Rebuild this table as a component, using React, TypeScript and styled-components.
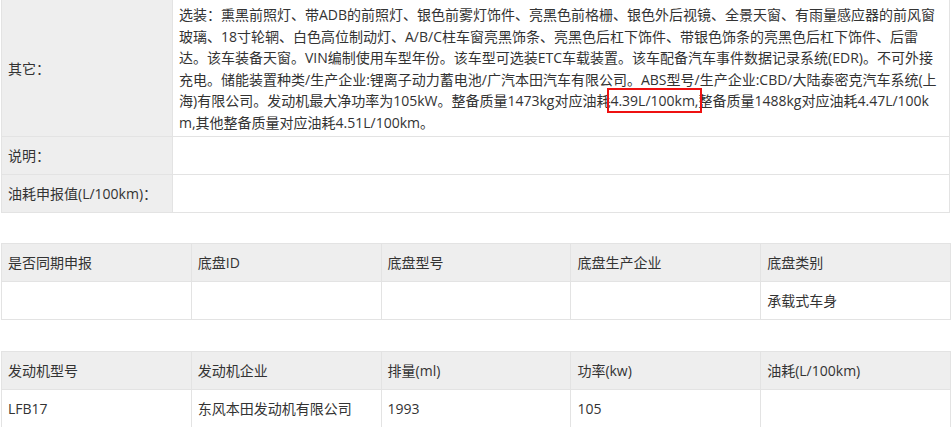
import React from 'react';
import styled, { createGlobalStyle } from 'styled-components';

const GlobalStyle = createGlobalStyle`
  html, body {
    margin: 0;
    padding: 0;
    background: #ffffff;
  }
  body {
    font-family: "Open Sans", "Noto Sans CJK SC", "Noto Sans", sans-serif;
    font-size: 14px;
    color: #333333;
  }
`

const Page = styled.div`
  width: 950px;
  padding: 0 1px;
  overflow: hidden;
  height: 427px;
`

const InfoTable = styled.table`
  width: 949px;
  border-collapse: collapse;
  table-layout: fixed;
  margin-top: -1px;
`

const LabelCell = styled.td`
  width: 158px;
  background-color: #eeeeee;
  border: 1px solid #e3e3e3;
  padding: 8px 6px;
  line-height: 21px;
  vertical-align: middle;
  white-space: nowrap;
`

const ValueCell = styled.td<{ $tall?: boolean }>`
  background-color: #ffffff;
  border: 1px solid #e3e3e3;
  padding: ${p => (p.$tall ? '4px 6px 3px' : '8px 6px')};
  line-height: ${p => (p.$tall ? '21.5px' : '21px')};
  vertical-align: middle;
`

const TextLine = styled.span`
  display: block;
  white-space: nowrap;
`

const Marked = styled.span`
  outline: 2px solid #ee1111;
  outline-offset: 1px;
`

const GridTable = styled.table<{ $top: number }>`
  width: 950px;
  border-collapse: collapse;
  table-layout: fixed;
  margin-top: ${p => p.$top}px;
`

const HeadCell = styled.td`
  width: 20%;
  background-color: #eeeeee;
  border: 1px solid #e3e3e3;
  padding: 8px 6px;
  line-height: 21px;
  white-space: nowrap;
`

const BodyCell = styled.td`
  background-color: #ffffff;
  border: 1px solid #e3e3e3;
  padding: 8px 6px;
  line-height: 21px;
  height: 21px;
  white-space: nowrap;
`

const otherLines = [
  '选装：熏黑前照灯、带ADB的前照灯、银色前雾灯饰件、亮黑色前格栅、银色外后视镜、全景天窗、有雨量感应器的前风窗',
  '玻璃、18寸轮辋、白色高位制动灯、A/B/C柱车窗亮黑饰条、亮黑色后杠下饰件、带银色饰条的亮黑色后杠下饰件、后雷',
  '达。该车装备天窗。VIN编制使用车型年份。该车型可选装ETC车载装置。该车配备汽车事件数据记录系统(EDR)。不可外接',
  '充电。储能装置种类/生产企业:锂离子动力蓄电池/广汽本田汽车有限公司。ABS型号/生产企业:CBD/大陆泰密克汽车系统(上',
]

const chassisHead = ['是否同期申报', '底盘ID', '底盘型号', '底盘生产企业', '底盘类别']
const chassisRow = ['', '', '', '', '承载式车身']

const engineHead = ['发动机型号', '发动机企业', '排量(ml)', '功率(kw)', '油耗(L/100km)']
const engineRow = ['LFB17', '东风本田发动机有限公司', '1993', '105', '']

const Grid: React.FC<{ head: string[]; row: string[]; top: number }> = ({ head, row, top }) => (
  <GridTable $top={top}>
    <tbody>
      <tr>
        {head.map(h => <HeadCell key={h}>{h}</HeadCell>)}
      </tr>
      <tr>
        {row.map((c, i) => <BodyCell key={i}>{c}</BodyCell>)}
      </tr>
    </tbody>
  </GridTable>
)

const App: React.FC = () => {
  return (
    <Page>
      <GlobalStyle />
      <InfoTable>
        <tbody>
          <tr>
            <LabelCell>其它：</LabelCell>
            <ValueCell $tall>
              {otherLines.map(l => <TextLine key={l}>{l}</TextLine>)}
              <TextLine>
                海)有限公司。发动机最大净功率为105kW。整备质量1473kg对应油耗<Marked>4.39L/100km,</Marked>整备质量1488kg对应油耗4.47L/100k
              </TextLine>
              <TextLine>m,其他整备质量对应油耗4.51L/100km。</TextLine>
            </ValueCell>
          </tr>
          <tr>
            <LabelCell>说明：</LabelCell>
            <ValueCell />
          </tr>
          <tr>
            <LabelCell>油耗申报值(L/100km)：</LabelCell>
            <ValueCell />
          </tr>
        </tbody>
      </InfoTable>
      <Grid head={chassisHead} row={chassisRow} top={30} />
      <Grid head={engineHead} row={engineRow} top={31} />
    </Page>
  );
}

export default App;
